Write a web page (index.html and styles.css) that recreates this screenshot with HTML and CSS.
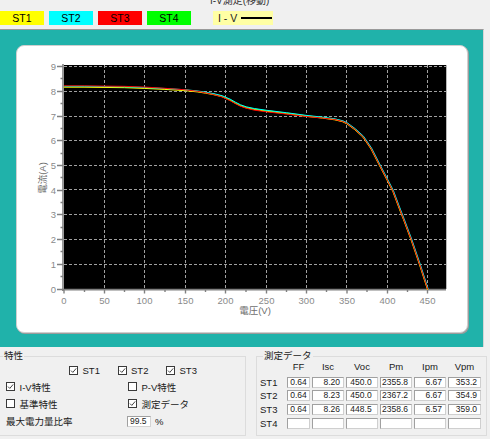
FILE: index.html
```html
<!DOCTYPE html>
<html lang="ja">
<head>
<meta charset="utf-8">
<title>I-V測定</title>
<link rel="stylesheet" href="styles.css">
</head>
<body>
<div class="app">
  <header class="topbar">
    <div class="stations">
      <span class="st st1">ST1</span>
      <span class="st st2">ST2</span>
      <span class="st st3">ST3</span>
      <span class="st st4">ST4</span>
    </div>
    <div class="ivgroup">
      <div class="ivlabel"><span>I-V測定(移動)</span></div>
      <div class="ivbox"><span>I - V</span><span class="ivline"></span></div>
    </div>
  </header>

  <section class="main">
    <div class="card">
      <svg class="chart" width="450" height="286" viewBox="17 46 450 286">
        <rect x="64" y="65" width="382" height="224" fill="#000"/>
        <g class="grid">
          <path d="M104.5 65V289M144.5 65V289M185.5 65V289M225.5 65V289M266.5 65V289M306.5 65V289M346.5 65V289M387.5 65V289M427.5 65V289"/>
          <path d="M64 66.5H446M64 91.5H446M64 116.5H446M64 140.5H446M64 165.5H446M64 189.5H446M64 214.5H446M64 239.5H446M64 264.5H446"/>
        </g>
        <path class="edge" d="M446.5 65V289"/>
        <path class="axis" d="M63 64V291M62 289.6H446"/>
        <path class="ticks" d="M57 289.5H63M60.5 276.5H63M57 264.5H63M60.5 251.5H63M57 239.5H63M60.5 227.5H63M57 214.5H63M60.5 202.5H63M57 190.5H63M60.5 177.5H63M57 165.5H63M60.5 153.5H63M57 140.5H63M60.5 128.5H63M57 116.5H63M60.5 103.5H63M57 91.5H63M60.5 78.5H63M57 66.5H63"/>
        <path class="ticks" d="M64 289V293.5M84.5 289V292M104.5 289V293.5M124.5 289V292M144.5 289V293.5M165 289V292M185.5 289V293.5M205.5 289V292M225.5 289V293.5M246 289V292M266.5 289V293.5M286.5 289V292M306.5 289V293.5M326.5 289V292M347 289V293.5M367 289V292M387.5 289V293.5M407.5 289V292M427.5 289V293.5"/>
        <g class="ylabels">
          <text x="56" y="293">0</text>
          <text x="56" y="268">1</text>
          <text x="56" y="243">2</text>
          <text x="56" y="218">3</text>
          <text x="56" y="194">4</text>
          <text x="56" y="169">5</text>
          <text x="56" y="144">6</text>
          <text x="56" y="120">7</text>
          <text x="56" y="95">8</text>
          <text x="56" y="70">9</text>
        </g>
        <g class="xlabels">
          <text x="64" y="304">0</text>
          <text x="104.5" y="304">50</text>
          <text x="144.5" y="304">100</text>
          <text x="185.5" y="304">150</text>
          <text x="225.5" y="304">200</text>
          <text x="266.5" y="304">250</text>
          <text x="306.5" y="304">300</text>
          <text x="347" y="304">350</text>
          <text x="387.5" y="304">400</text>
          <text x="427.5" y="304">450</text>
        </g>
        <text class="atitle" x="255" y="314" text-anchor="middle">電圧(V)</text>
        <text class="atitle" transform="translate(46 178) rotate(-90)" text-anchor="middle">電流(A)</text>

        <g transform="translate(64 289.3) scale(0.8084 -24.72)">
          <polyline class="curve c-green" points="0,8.20 25,8.20 50,8.19 75,8.18 100,8.15 125,8.11 150,8.06 165,8.01 175,7.96 185,7.90 195,7.82 205,7.68 212,7.55 218,7.45 225,7.37 235,7.30 250,7.23 275,7.13 300,7.02 320,6.95 335,6.88 345,6.80 350,6.72 360,6.48 370,6.18 380,5.70 390,5.06 400,4.43 407,3.98 415,3.28 420,2.86 430,1.98 440,1.02 450,0"/>
        </g>
        <g transform="translate(63.8 289.9) scale(0.8084 -24.72)">
          <polyline class="curve c-yellow" points="0,8.20 25,8.20 50,8.19 75,8.18 100,8.15 125,8.11 150,8.06 165,8.01 175,7.96 185,7.90 195,7.82 205,7.68 212,7.55 218,7.45 225,7.37 235,7.30 250,7.23 275,7.13 300,7.02 320,6.95 335,6.88 345,6.80 350,6.72 360,6.48 370,6.18 380,5.70 390,5.06 400,4.43 407,3.98 415,3.28 420,2.86 430,1.98 440,1.02 450,0"/>
        </g>
        <g transform="translate(64.4 289) scale(0.8084 -24.72)">
          <polyline class="curve c-cyan" points="0,8.20 25,8.20 50,8.19 75,8.18 100,8.15 125,8.11 150,8.06 165,8.01 175,7.96 185,7.90 195,7.82 205,7.68 212,7.55 218,7.45 225,7.37 235,7.30 250,7.23 275,7.13 300,7.02 320,6.95 335,6.88 345,6.80 350,6.72 360,6.48 370,6.18 380,5.70 390,5.06 400,4.43 407,3.98 415,3.28 420,2.86 430,1.98 440,1.02 450,0"/>
        </g>
        <g transform="translate(64 289.3) scale(0.8084 -24.72)">
          <polyline class="curve c-red" points="0,8.23 25,8.23 50,8.22 75,8.21 100,8.18 125,8.13 150,8.07 165,8.01 175,7.95 185,7.88 195,7.79 205,7.64 212,7.51 218,7.41 225,7.33 235,7.25 250,7.18 275,7.09 300,6.99 320,6.93 335,6.87 345,6.79 350,6.71 360,6.47 370,6.17 380,5.69 390,5.05 400,4.42 407,3.97 415,3.27 420,2.85 430,1.97 440,1.01 450,0"/>
        </g>
      </svg>
    </div>
  </section>

  <section class="bottom">
    <fieldset class="group group-left">
      <legend>特性</legend>
      <div class="strow">
        <label class="chk"><span class="cb"><svg viewBox="0 0 7 7"><path d="M1 3.6L2.8 5.4L6.2 1.4"/></svg></span>ST1</label>
        <label class="chk"><span class="cb"><svg viewBox="0 0 7 7"><path d="M1 3.6L2.8 5.4L6.2 1.4"/></svg></span>ST2</label>
        <label class="chk"><span class="cb"><svg viewBox="0 0 7 7"><path d="M1 3.6L2.8 5.4L6.2 1.4"/></svg></span>ST3</label>
      </div>
      <div class="optgrid">
        <label class="chk"><span class="cb"><svg viewBox="0 0 7 7"><path d="M1 3.6L2.8 5.4L6.2 1.4"/></svg></span>I-V特性</label>
        <label class="chk"><span class="cb"></span>P-V特性</label>
        <label class="chk"><span class="cb"></span>基準特性</label>
        <label class="chk"><span class="cb"><svg viewBox="0 0 7 7"><path d="M1 3.6L2.8 5.4L6.2 1.4"/></svg></span>測定データ</label>
        <span class="lbl">最大電力量比率</span>
        <span class="ratio"><span class="field">99.5</span><span>%</span></span>
      </div>
    </fieldset>

    <fieldset class="group group-right">
      <legend>測定データ</legend>
      <div class="datagrid">
        <span></span>
        <span class="hd">FF</span>
        <span class="hd">Isc</span>
        <span class="hd">Voc</span>
        <span class="hd">Pm</span>
        <span class="hd">Ipm</span>
        <span class="hd">Vpm</span>

        <span class="rl">ST1</span>
        <span class="box c">0.64</span>
        <span class="box">8.20</span>
        <span class="box m">450.0</span>
        <span class="box">2355.8</span>
        <span class="box">6.67</span>
        <span class="box">353.2</span>

        <span class="rl">ST2</span>
        <span class="box c">0.64</span>
        <span class="box">8.23</span>
        <span class="box m">450.0</span>
        <span class="box">2367.2</span>
        <span class="box">6.67</span>
        <span class="box">354.9</span>

        <span class="rl">ST3</span>
        <span class="box c">0.64</span>
        <span class="box">8.26</span>
        <span class="box m">448.5</span>
        <span class="box">2358.6</span>
        <span class="box">6.57</span>
        <span class="box">359.0</span>

        <span class="rl">ST4</span>
        <span class="box c"></span>
        <span class="box"></span>
        <span class="box m"></span>
        <span class="box"></span>
        <span class="box"></span>
        <span class="box"></span>
      </div>
    </fieldset>
  </section>
</div>
</body>
</html>
```

FILE: styles.css
```css
html, body {
  margin: 0;
  background: #f0f0f0;
}

body {
  width: 490px;
  height: 439px;
  overflow: hidden;
  font-family: "Liberation Sans", "Noto Sans CJK JP", sans-serif;
  color: #1a1a1a;
}

/* ---------- top bar ---------- */
.topbar {
  display: flex;
  height: 29px;
}

.stations {
  display: flex;
  gap: 5px;
  margin-top: 11px;
  height: 14px;
}

.st {
  width: 44px;
  height: 14px;
  display: flex;
  align-items: center;
  justify-content: center;
  font-size: 10.5px;
  color: #000;
}

.st1 { background: #ffff00; }
.st2 { background: #00ffff; }
.st3 { background: #ff0000; }
.st4 { background: #00ff00; }

.ivgroup {
  margin-left: 22px;
  display: flex;
  flex-direction: column;
}

.ivlabel {
  height: 6px;
  overflow: hidden;
  display: flex;
  align-items: flex-end;
  margin-left: -3px;
  margin-bottom: 5px;
  font-size: 10px;
  line-height: 10px;
  color: #333;
  white-space: nowrap;
}

.ivbox {
  width: 60px;
  height: 14px;
  box-sizing: border-box;
  background: #ffffa4;
  display: flex;
  align-items: center;
  gap: 4px;
  padding-left: 5px;
  font-size: 10.5px;
  color: #222;
  white-space: pre;
}

.ivline {
  width: 31px;
  height: 1.5px;
  background: #000;
}

/* ---------- chart area ---------- */
.main {
  width: 484px;
  height: 318px;
  box-sizing: border-box;
  background: #20b2aa;
  border-top: 1px solid #9a9a9a;
  border-right: 1px solid #d5d5d5;
  padding: 15px 0 0 16px;
}

.card {
  width: 452px;
  height: 288px;
  box-sizing: border-box;
  background: #fff;
  border: 1px solid #cfcfcf;
  border-radius: 8px;
  box-shadow: 1px 1px 0 #9c9c9c;
  overflow: hidden;
}

.chart {
  display: block;
}

.grid path {
  stroke: #a0a0a0;
  stroke-width: 1;
  stroke-dasharray: 3 2;
  fill: none;
}

.edge {
  stroke: #b8b8b8;
  stroke-width: 1;
}

.axis {
  stroke: #808080;
  stroke-width: 1.6;
  fill: none;
}

.ticks {
  stroke: #808080;
  stroke-width: 1.4;
  fill: none;
}

.ylabels text {
  font-size: 9.5px;
  fill: #8a8a8a;
  text-anchor: end;
}

.xlabels text {
  font-size: 9.5px;
  fill: #8a8a8a;
  text-anchor: middle;
}

.atitle {
  font-size: 9.5px;
  fill: #6e6e6e;
}

.curve {
  fill: none;
  stroke-width: 1;
  vector-effect: non-scaling-stroke;
}

.c-green { stroke: #00ff00; }
.c-yellow { stroke: #ffff00; }
.c-cyan { stroke: #00ffff; }
.c-red { stroke: #ff0000; }

/* ---------- bottom panels ---------- */
.bottom {
  display: flex;
  height: 92px;
  box-sizing: border-box;
  padding-top: 3px;
}

.group {
  margin: 0;
  padding: 0;
  height: 86px;
  box-sizing: border-box;
  border: 1px solid #dcdcdc;
  min-width: 0;
  font-size: 9.5px;
}

.group legend {
  font-size: 9.5px;
  line-height: 12px;
  padding: 0 1px;
  color: #222;
}

.group-left {
  width: 246px;
  border-left: none;
}

.group-left legend {
  margin-left: 3px;
}

.group-right {
  width: 231px;
  margin-left: 10px;
}

.group-right legend {
  margin-left: 6px;
}

.strow {
  display: flex;
  align-items: center;
  height: 16px;
  padding-left: 69px;
}

.strow .chk {
  width: 48.5px;
}

.chk {
  display: flex;
  align-items: center;
  gap: 4.5px;
  white-space: nowrap;
}

.cb {
  width: 9px;
  height: 9px;
  box-sizing: border-box;
  border: 1px solid #3a3a3a;
  background: #fff;
  display: flex;
  align-items: center;
  justify-content: center;
  flex: none;
}

.cb svg {
  width: 7px;
  height: 7px;
  display: block;
}

.cb path {
  fill: none;
  stroke: #444;
  stroke-width: 1;
}

.optgrid {
  display: grid;
  grid-template-columns: 122px auto;
  grid-template-rows: 17px 17px 18px;
  align-items: center;
  padding-left: 6px;
}

.ratio {
  display: flex;
  align-items: center;
  gap: 4px;
  margin-left: -1px;
}

.field {
  width: 24px;
  height: 11px;
  box-sizing: border-box;
  background: #fff;
  border: 1px solid;
  border-color: #a0a0a0 #d4d4d4 #d4d4d4 #a0a0a0;
  font-size: 8.5px;
  line-height: 9px;
  padding-left: 2px;
}

.datagrid {
  display: grid;
  grid-template-columns: 28px 23px 32px 32px 32px 32px 33px;
  grid-template-rows: 12px repeat(4, 11px);
  column-gap: 2px;
  row-gap: 2.7px;
}

.hd {
  align-self: start;
  text-align: center;
  font-size: 9.5px;
  line-height: 10px;
}

.rl {
  align-self: center;
  padding-left: 3px;
  font-size: 9.5px;
  line-height: 11px;
}

.box {
  background: #fff;
  border: 1px solid;
  border-color: #a0a0a0 #cfcfcf #cfcfcf #a0a0a0;
  box-sizing: border-box;
  font-size: 8.5px;
  line-height: 9px;
  text-align: right;
  padding-right: 3px;
  white-space: nowrap;
  overflow: hidden;
}

.box.c {
  text-align: center;
  padding-right: 0;
}

.box.m {
  text-align: center;
  padding-right: 2px;
}
```
